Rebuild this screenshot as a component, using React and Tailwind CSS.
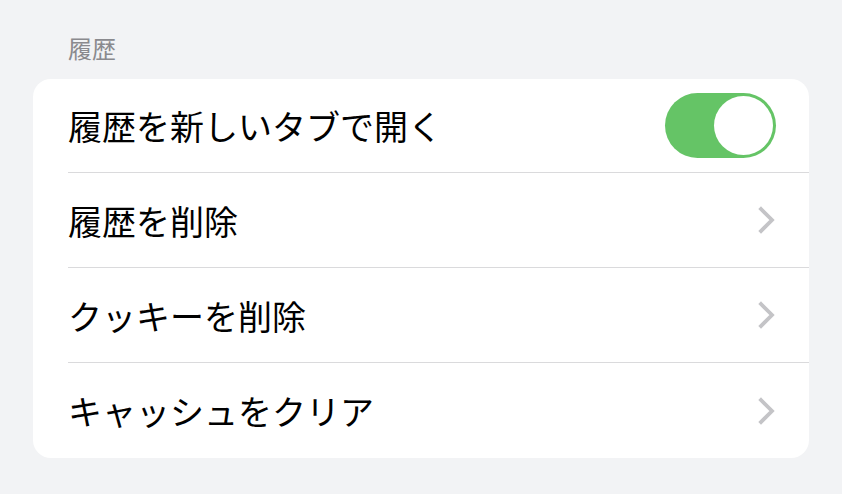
import React, { useState } from 'react';

const font = { fontFamily: '"Noto Sans CJK JP", "Noto Sans", sans-serif' };

const rows = ['履歴を削除', 'クッキーを削除', 'キャッシュをクリア'];

function Chevron() {
  return (
    <svg width="18" height="28" viewBox="0 0 18 28" fill="none">
      <path d="M3 3l11 11L3 25" stroke="#c4c4c7" strokeWidth="3.8" strokeLinecap="square" strokeLinejoin="miter" />
    </svg>
  );
}

function Toggle({ on, onClick }) {
  return (
    <button type="button" onClick={onClick} className={`w-[111px] h-[65px] rounded-full p-[3px] flex items-center ${on ? 'bg-[#65c466] justify-end' : 'bg-[#e9e9eb] justify-start'}`}>
      <span className="block w-[59px] h-[59px] rounded-full bg-white" />
    </button>
  );
}

export default function App() {
  const [open, setOpen] = useState(true);

  return (
    <div className="w-[842px] h-[494px] bg-[#f2f3f5] px-[33px] pt-[31px]" style={font}>
      <div className="pl-[35px] text-[24px] leading-[34px] text-[#8a8a8e] mb-[14px]">履歴</div>
      <div className="bg-white rounded-[18px] overflow-hidden">
        <div className="pl-[35px]">
          <div className="h-[94px] flex items-center justify-between pr-[33px] border-b border-[#dadadc]">
            <span className="text-[34px] text-black">履歴を新しいタブで開く</span>
            <Toggle on={open} onClick={() => setOpen(!open)} />
          </div>
          {rows.map((r, i) => (
            <div key={r} className={`h-[95px] flex items-center justify-between pr-[33px] ${i < rows.length - 1 ? 'border-b border-[#dadadc]' : ''}`}>
              <span className="text-[34px] text-black">{r}</span>
              <Chevron />
            </div>
          ))}
        </div>
      </div>
    </div>
  );
}
